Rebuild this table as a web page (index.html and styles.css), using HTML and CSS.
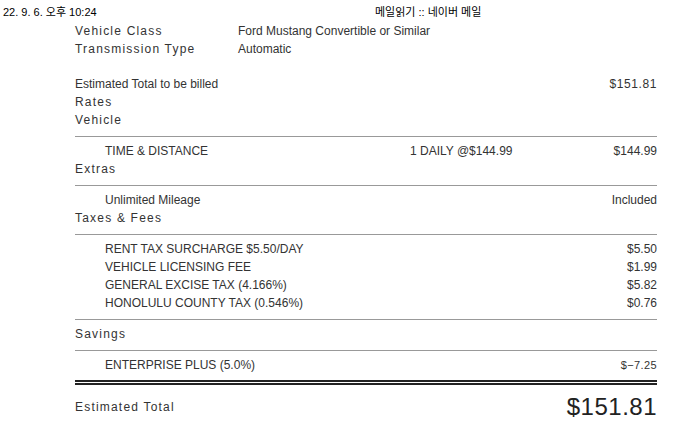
FILE: index.html
```html
<!DOCTYPE html>
<html>
<head>
<meta charset="utf-8">
<link rel="stylesheet" href="styles.css">
</head>
<body>
<header class="print-head">
  <span class="date">22. 9. 6. 오후 10:24</span>
  <span class="title">메일읽기 :: 네이버 메일</span>
</header>
<main class="sheet">
  <div class="row"><span class="lbl spaced">Vehicle Class</span><span class="val">Ford Mustang Convertible or Similar</span></div>
  <div class="row"><span class="lbl spaced">Transmission Type</span><span class="val">Automatic</span></div>

  <div class="row gap-top"><span class="grow">Estimated Total to be billed</span><span class="amt spaced-s">$151.81</span></div>
  <div class="row"><span class="spaced">Rates</span></div>
  <div class="row"><span class="spaced">Vehicle</span></div>
  <hr class="rule">
  <div class="row item"><span class="desc">TIME &amp; DISTANCE</span><span class="qty">1 DAILY @$144.99</span><span class="amt">$144.99</span></div>
  <div class="row"><span class="spaced">Extras</span></div>
  <hr class="rule">
  <div class="row item"><span class="grow">Unlimited Mileage</span><span class="amt">Included</span></div>
  <div class="row"><span class="spaced">Taxes &amp; Fees</span></div>
  <hr class="rule">
  <div class="row item"><span class="grow">RENT TAX SURCHARGE $5.50/DAY</span><span class="amt">$5.50</span></div>
  <div class="row item"><span class="grow">VEHICLE LICENSING FEE</span><span class="amt">$1.99</span></div>
  <div class="row item"><span class="grow">GENERAL EXCISE TAX (4.166%)</span><span class="amt">$5.82</span></div>
  <div class="row item"><span class="grow">HONOLULU COUNTY TAX (0.546%)</span><span class="amt">$0.76</span></div>
  <hr class="rule">
  <div class="row"><span class="spaced">Savings</span></div>
  <hr class="rule">
  <div class="row item"><span class="grow">ENTERPRISE PLUS (5.0%)</span><span class="amt small">$−7.25</span></div>
  <hr class="double">
  <div class="total"><span class="spaced grow">Estimated Total</span><span class="big">$151.81</span></div>
</main>
</body>
</html>
```
FILE: styles.css
```css
html, body {
  margin: 0;
  padding: 0;
  background: #fff;
}
body {
  font-family: "Liberation Sans", Arial, "Noto Sans CJK KR", sans-serif;
  color: #333;
  font-size: 12px;
  width: 676px;
  height: 432px;
  overflow: hidden;
}
.print-head {
  display: grid;
  grid-template-columns: 372px 1fr;
  height: 22px;
  align-items: center;
  font-size: 11px;
  color: #000;
  padding-left: 3px;
}
.sheet {
  margin-left: 75px;
  width: 582px;
}
.row {
  display: flex;
  align-items: center;
  height: 18px;
  line-height: 18px;
}
.gap-top { margin-top: 17px; }
.lbl { width: 163px; }
.spaced { letter-spacing: 1.2px; }
.spaced-s { letter-spacing: 0.6px; }
.grow { flex: 1; }
.item { padding-left: 30px; }
.desc { width: 305px; }
.qty { flex: 1; }
.amt { text-align: right; }
.small { font-size: 11px; letter-spacing: 0.4px; }
.rule {
  border: 0;
  border-top: 1px solid #999;
  margin: 7px 0 5px;
  height: 0;
}
.double {
  border: 0;
  border-top: 2px solid #222;
  border-bottom: 2px solid #222;
  height: 1px;
  margin: 6px 0 0;
  box-sizing: content-box;
}
.total {
  display: flex;
  align-items: center;
  height: 44px;
}
.big {
  font-size: 24px;
  letter-spacing: 0.5px;
  color: #222;
}
```
